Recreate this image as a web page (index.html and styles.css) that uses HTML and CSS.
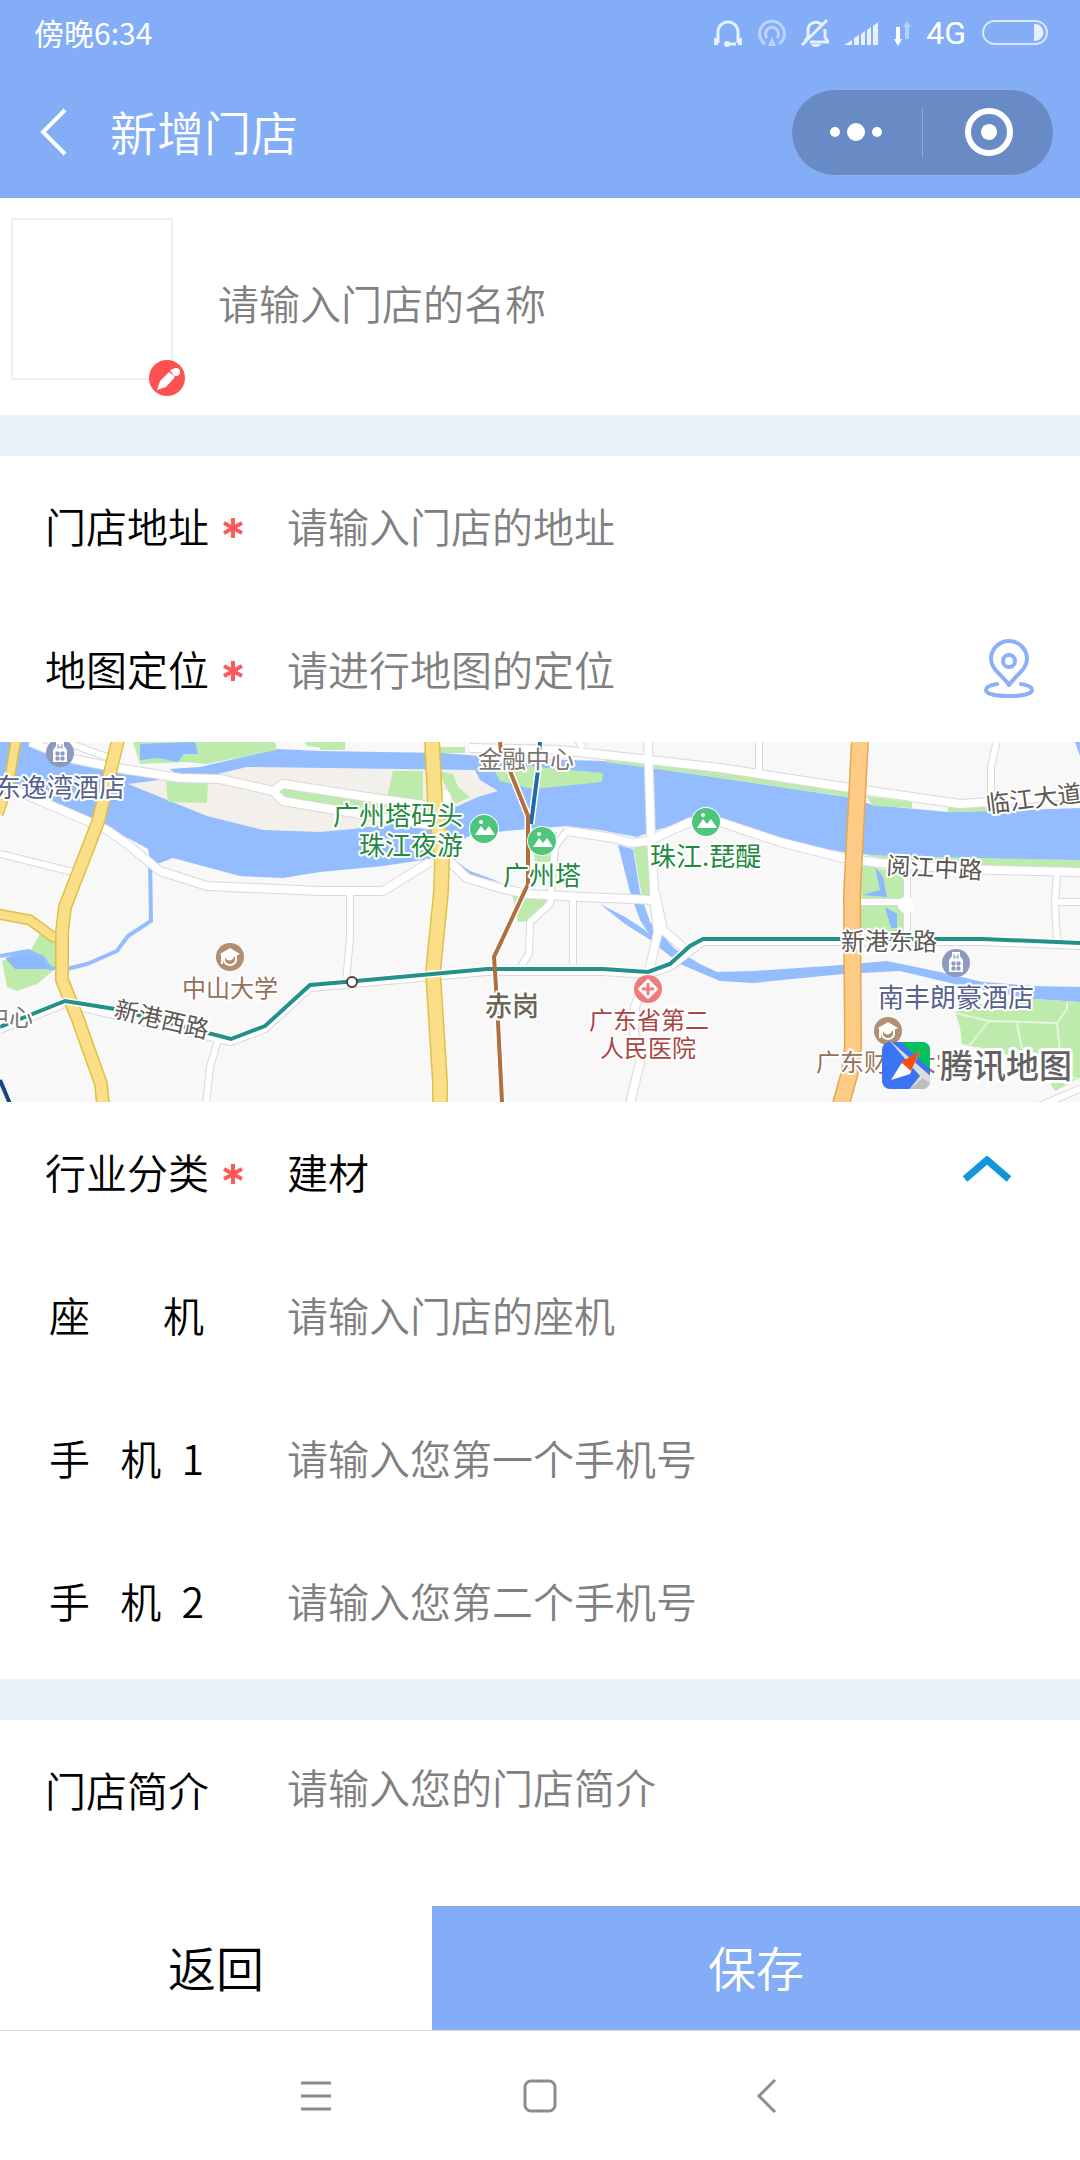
FILE: index.html
```
<!DOCTYPE html>
<html lang="zh-CN">
<head>
    <meta charset="UTF-8">
    <meta name="viewport" content="width=device-width, initial-scale=1.0">
    <title>新增门店</title>
    <link rel="stylesheet" href="styles.css">
</head>
<body>
    <header class="header">
        <div class="status-bar">
            <span class="time">傍晚6:34</span>
            <div class="status-icons">
                <svg width="30" height="30" viewBox="0 0 30 30" fill="none" stroke="#e6f0ff" stroke-width="3">
                    <path d="M5 25V14a10 10 0 0 1 20 0v11M14 26h9"/>
                    <path d="M3 20v7M27 20v7" stroke-width="4"/>
                    <circle cx="14" cy="26" r="2" fill="#e6f0ff" stroke-width="2"/>
                </svg>
                <svg width="28" height="30" viewBox="0 0 28 30" fill="none" stroke="#bcd4ff" stroke-width="3">
                    <path d="M7 26a12.500 12.500 0 1 1 14 0"/>
                    <path d="M9 20a6.500 6.500 0 1 1 10 0"/>
                    <path d="M14 19l4 9h-8z" fill="#bcd4ff" stroke="none"/>
                </svg>
                <svg width="28" height="30" viewBox="0 0 28 30" fill="none" stroke="#e6f0ff" stroke-width="3">
                    <path d="M4 23l3-4V12a8 8 0 0 1 13-6M24 11v8l3 5H9M1 27L26 2"/>
                    <path d="M10 26h10a5 3 0 0 1-10 0z" fill="#e6f0ff" stroke="none"/>
                </svg>
                <svg width="34" height="30" viewBox="0 0 34 30" fill="#e6f0ff">
                    <path d="M0 27l8-5v5zM10 20l5-3v10h-5zM17 16l4-3v14h-4zM23 12l4-3v18h-4zM29 8l5-4v23h-5z"/>
                </svg>
                <svg width="18" height="30" viewBox="0 0 18 30">
                    <path d="M3 9h4v12h2l-4 7-4-7h2z" fill="#fff"/>
                    <path d="M12 21h4V9h2l-4-6-4 6h2z" fill="#b4cfff"/>
                </svg>
                <span class="network">4G</span>
                <svg width="68" height="30" viewBox="0 0 68 30">
                    <rect x="2" y="3" width="64" height="23" rx="11.500" fill="none" stroke="#d8e6ff" stroke-width="2"/>
                    <path d="M53 6h1a8.500 8.500 0 0 1 0 17h-1z" fill="#e6f0ff"/>
                </svg>
            </div>
        </div>
        <div class="nav-bar">
            <button class="back-btn" type="button" aria-label="返回">
                <svg width="28" height="48" viewBox="0 0 28 48"><path d="M26 2L4 24l22 22" fill="none" stroke="#fff" stroke-width="4"/></svg>
            </button>
            <h1>新增门店</h1>
            <div class="capsule">
                <button type="button" aria-label="更多">
                    <svg width="54" height="54" viewBox="0 0 54 54" fill="#fff"><circle cx="5" cy="27" r="5"/><circle cx="26" cy="27" r="9"/><circle cx="47" cy="27" r="5"/></svg>
                </button>
                <button type="button" aria-label="关闭">
                    <svg width="54" height="54" viewBox="0 0 54 54"><circle cx="28" cy="27" r="21" fill="none" stroke="#fff" stroke-width="6"/><circle cx="28" cy="27" r="8" fill="#fff"/></svg>
                </button>
            </div>
        </div>
    </header>

    <form class="store-form">
        <section class="store-name">
            <button class="logo-box" type="button" aria-label="上传图片">
                <svg class="edit-badge" width="36" height="36" viewBox="0 0 36 36">
                    <circle cx="18" cy="18" r="18" fill="#fd5151"/>
                    <path d="M8 30l3-9 9-9 6 5-9 10zM21 11l2-2 6 5-2 2z" fill="#fff"/>
                    <circle cx="27" cy="12" r="4" fill="#fff"/>
                </svg>
            </button>
            <input type="text" aria-label="门店名称" placeholder="请输入门店的名称">
        </section>

        <section class="group">
            <div class="row">
                <label for="address">门店地址</label>
                <svg class="required" viewBox="0 0 22 22"><path d="M11 1v20M2 6l18 10M2 16L20 6"/></svg>
                <input type="text" id="address" placeholder="请输入门店的地址">
            </div>
            <div class="row">
                <label for="location">地图定位</label>
                <svg class="required" viewBox="0 0 22 22"><path d="M11 1v20M2 6l18 10M2 16L20 6"/></svg>
                <input type="text" id="location" placeholder="请进行地图的定位">
                <button class="pin-btn" type="button" aria-label="定位">
                    <svg width="50" height="62" viewBox="0 0 50 62" fill="none" stroke="#8bb0fa" stroke-width="4" stroke-linecap="round" stroke-linejoin="round">
                        <path d="M25 48C18 38 7 32 7 22a18 18 0 0 1 36 0c0 10-11 16-18 26z"/>
                        <circle cx="25" cy="24" r="6"/>
                        <path d="M13 47C6 48 2 50 2 53c0 4 10 6 23 6s23-2 23-6c0-3-4-5-11-6"/>
                    </svg>
                </button>
            </div>

            <svg class="map" viewBox="0 0 1080 360">
                <defs>
                    <g id="hotel">
                        <circle r="14" fill="#8d99bf"/>
                        <path d="M-7 9V-3l3-4v-4h8v4l3 4V9z" fill="#fff"/>
                        <path d="M-2-9v5M2-9v5M-2-6h4M-4-1h3v3h-3zM1-1h3v3h-3zM-4 4h3v3h-3zM1 4h3v3h-3z" fill="#8d99bf" stroke="#8d99bf"/>
                    </g>
                    <g id="school">
                        <circle r="14" fill="#b08e72"/>
                        <path d="M-10-3L0-9l10 6-6 3a5 6 0 0 1-9 0l-2-1v8h-2v-9z" fill="#fff"/>
                        <path d="M-6-1v4a6 5 0 0 0 12 0v-4" fill="none" stroke="#fff" stroke-width="2"/>
                    </g>
                    <g id="scenic">
                        <circle r="15" fill="#fff"/>
                        <circle r="14" fill="#4dc57b"/>
                        <path d="M-9 6l6-9 4 5 4-5 6 9z" fill="#fff"/>
                        <circle cx="-3" cy="-7" r="2" fill="#fff"/>
                    </g>
                    <g id="roads">
                        <path d="M0 42L43 60 90 80 107 88 127 102 160 129 207 144 320 149 383 149 430 120M448 118L467 136 500 146 527 152 583 155 655 158"/>
                        <path d="M650 98L690 80 720 80 780 100 843 116 880 121 960 127 1080 130M567 89L613 96 632 101 655 98"/>
                        <path d="M470 6L560 8 650 18 720 26 850 46 960 62 990 60 1080 52"/>
                        <path d="M648 -2L651 95 655 165 658 190 650 225 635 265 634 290 640 320 630 362M655 150L663 188 685 207"/>
                        <path d="M30 0L73 17 123 27 180 36 220 37 273 49 283 59 360 72 430 83M273 49L283 42 360 54 430 64"/>
                    </g>
                    <g id="streets">
                        <path d="M0 112L73 130M60 -2L107 15M350 149L350 195 346 240M573 155V222M567 89L555 105 550 162 530 180 529 212 520 226"/>
                        <path d="M759 -2V30M997 -2L991 25V58M907 126V194M1057 132L1055 160 1057 198M1057 160H1082M218 298L210 325 206 362M1030 368L1082 346M860 160H907M578 -2l5 8"/>
                        <path d="M0 288L65 262 231 300 265 287 310 246 487 230 603 230 648 233 670 225 703 200 983 200 1080 204"/>
                    </g>
                    <path id="avenue" d="M16 -2L8 45 -2 72M-2 172L30 178 53 195 60 194"/>
                    <path id="avenue-west" d="M118 -2L98 80 65 165 62 190 62 238 77 275 101 342 103 362"/>
                    <path id="avenue-mid" d="M432 -2L435 60 442 118 441 150 433 230 440 340 440 362"/>
                    <path id="avenue-east" d="M860 -2L852 152 853 305 850 330 841 362"/>
                    <path id="metro-line8" d="M0 285L65 259 115 267 231 297 265 284 310 243 345 240 487 227 603 227 648 230 670 222 690 204 703 197 983 197 1080 201"/>
                    <path id="metro-line3" d="M500 0L501 10 510 29 528 74 528 142 494 215 497 260 502 360"/>
                    <path id="metro-apm" d="M540 0L538 28 531 82"/>
                </defs>
                <rect width="1080" height="360" fill="#f8f8f8"/>

                <!-- 水域 -->
                <g fill="#94bdff">
                    <path d="M0 0H28L70 18 122 32 180 35 170 27 200 25 277 7 320 9 443 11 480 14 570 18 603 19 700 33 847 55 873 63 948 70 990 69 1080 66V119L913 118 887 115 843 110 780 99 722 82 690 78 650 90 637 95 600 88 567 84 505 89 470 94 450 103 430 117 383 124 320 130 283 136 240 134 173 116 157 122 150 118 148 107 130 97 107 87 90 82 40 58 0 44z"/>
                    <path d="M618 103L633 107 640 150 650 180 675 207 700 222 717 230 753 229 842 223 887 219 940 230 983 240 1033 244 1080 245V260L1033 257 967 245 900 229 843 232 753 241 720 239 680 222 655 202 640 178 630 150z"/>
                    <path d="M600 162L625 175 645 188 660 204 625 182zM454 118L470 129 500 140 470 134zM1075 0h5v14z"/>
                </g>

                <!-- 江心岛 -->
                <path d="M128 42L190 34 213 33 247 25 475 28 480 38 498 49 478 55 440 72 405 80 353 87 320 90 263 88 207 74z" fill="#f3f0eb"/>

                <!-- 绿地 -->
                <g fill="#bcebac">
                    <path d="M133 0H275L277 8 207 22 187 20 140 22zM305 0h40v8l-38-4zM320 0h25v8h-25zM440 5h25v6h-25z"/>
                    <path d="M166 40h42l-1 21-39-1zM273 52l10-8 77 13 27 7v8l-95-13zM387 55l6-26h30v30zM438 29l15 3 5 13 12 10-15 7z"/>
                    <path d="M495 30L527 24 603 31 602 40 533 47 500 39z"/>
                    <path d="M606 16L720 29 848 50V55L700 33 605 20zM866 54L912 60V66L873 64zM948 64L990 62V69L948 70zM860 112L890 114 1080 118V126L920 124z"/>
                    <path d="M40 192L55 199V227L37 242 17 249 7 245 2 219 30 209z"/>
                    <path d="M633 104L652 104V155H642zM512 152h38v10l-20 17-12 1zM533 105l24-15-4 30h-18z"/>
                    <path d="M860 122L903 132V190H860z"/>
                    <path d="M955 270L980 262 1033 257 1080 260V336L1055 349 1045 333 1030 318 962 302 960 285z"/>
                </g>
                <path d="M140 2L195 0 198 12 184 12 178 20 158 16 140 18zM875 125l8 10 4 20-25-2 18-5zM885 165l12 7v14h-6zM5 216l25-7 12 4 8 14H15z" fill="#8cb8ff"/>
                <path d="M150 118L151 179 128 194 117 209 87 222 67 227 50 226 42 215 28 209 0 214" fill="none" stroke="#94bdff" stroke-width="4"/>
                <path d="M955 271l34 8 68 2 10-14V260M989 279l-24 30M1017 281l4 22 10 22M1057 281l4 38M1030 318l50 20" fill="none" stroke="#e3f6dc" stroke-width="2"/>

                <!-- 普通道路 -->
                <g fill="none" stroke-linejoin="round">
                    <use href="#roads" stroke="#d9d9dd" stroke-width="10"/>
                    <use href="#streets" stroke="#d9d9dd" stroke-width="8"/>
                    <use href="#roads" stroke="#fff" stroke-width="8"/>
                    <use href="#streets" stroke="#fff" stroke-width="6"/>
                </g>
                <circle cx="906" cy="163" r="8" fill="#fff"/>
                <circle cx="444" cy="55" r="7" fill="#fff"/>

                <!-- 主干道 -->
                <g fill="none" stroke-linejoin="round">
                    <use href="#avenue" stroke="#e0bf45" stroke-width="11"/>
                    <use href="#avenue" stroke="#fbdf88" stroke-width="8"/>
                    <use href="#avenue-west" stroke="#e0bf45" stroke-width="14"/>
                    <use href="#avenue-west" stroke="#fbdf88" stroke-width="11"/>
                    <use href="#avenue-mid" stroke="#e0bf45" stroke-width="16"/>
                    <use href="#avenue-mid" stroke="#fbdf88" stroke-width="13"/>
                    <use href="#avenue-east" stroke="#e7a651" stroke-width="18"/>
                    <use href="#avenue-east" stroke="#fdcb85" stroke-width="15"/>
                </g>

                <!-- 地铁线 -->
                <g fill="none" stroke="#fff" stroke-width="7">
                    <use href="#metro-line8"/>
                    <use href="#metro-line3"/>
                    <use href="#metro-apm"/>
                </g>
                <g fill="none" stroke-width="4">
                    <use href="#metro-apm" stroke="#1b6ca8"/>
                    <path d="M0 338L10 362" stroke="#15457f"/>
                    <use href="#metro-line8" stroke="#23908a"/>
                    <use href="#metro-line3" stroke="#b26f3e"/>
                </g>
                <circle cx="352" cy="240" r="5" fill="#fff" stroke="#444" stroke-width="2"/>

                <use href="#hotel" x="60" y="11"/>
                <use href="#hotel" x="956" y="221"/>
                <use href="#school" x="230" y="215"/>
                <use href="#school" x="888" y="289"/>
                <use href="#scenic" x="484" y="87"/>
                <use href="#scenic" x="542" y="99"/>
                <use href="#scenic" x="706" y="80"/>
                <circle cx="648" cy="247" r="14" fill="#f07b7d"/>
                <path d="M648 238l9 9-9 9-9-9z" fill="#fff" stroke="#fff" stroke-width="2" stroke-linejoin="round"/>
                <path d="M648 241v12M642 247h12" stroke="#f07b7d" stroke-width="3"/>

                <!-- 地名 -->
                <g class="place">
                    <text class="hotel big" x="-5" y="55">东逸湾酒店</text>
                    <text class="hotel big" x="878" y="265">南丰朗豪酒店</text>
                    <text class="school" x="182" y="255">中山大学</text>
                    <text class="school" x="816" y="329">广东财经大学</text>
                    <text class="scenic big" x="333" y="83">广州塔码头</text>
                    <text class="scenic big" x="359" y="113">珠江夜游</text>
                    <text class="scenic big" x="503" y="143">广州塔</text>
                    <text class="scenic big" x="650" y="124">珠江.琵醍</text>
                    <text class="hospital" x="589" y="287">广东省第二</text>
                    <text class="hospital" x="600" y="315">人民医院</text>
                    <text class="station" x="485" y="274">赤岗</text>
                    <text class="center" x="478" y="26">金融中心</text>
                    <text class="center" x="-15" y="284">中心</text>
                    <text x="841" y="208">新港东路</text>
                    <text transform="translate(113 275) rotate(13)">新港西路</text>
                    <text transform="translate(886 132) rotate(3)">阅江中路</text>
                    <text transform="translate(987 71) rotate(-7)">临江大道</text>
                </g>

                <clipPath id="logo"><rect x="882" y="300" width="48" height="47" rx="8"/></clipPath>
                <g clip-path="url(#logo)">
                    <rect x="882" y="300" width="48" height="47" fill="#3b74f5"/>
                    <path d="M888 297L933 336V350H907L920 334z" fill="#dcdcdc"/>
                    <path d="M901 300h32v30z" fill="#06c160"/>
                    <path d="M910 347L923 336 933 345V350z" fill="#bdbdbd"/>
                </g>
                <path d="M920 309L901 322 891 338 910 332z" fill="#fff"/>
                <path d="M920 309L901 320 911 329z" fill="#fb4a12"/>
                <text class="brand" x="940" y="336">腾讯地图</text>
            </svg>

            <div class="row">
                <label for="category">行业分类</label>
                <svg class="required" viewBox="0 0 22 22"><path d="M11 1v20M2 6l18 10M2 16L20 6"/></svg>
                <select id="category">
                    <option>建材</option>
                </select>
                <svg class="arrow" width="50" height="30" viewBox="0 0 50 30"><path d="M3 23L25 4l22 19" fill="none" stroke="#1296db" stroke-width="7"/></svg>
            </div>
            <div class="row">
                <label class="spread" for="tel"><span>座</span><span>机</span></label>
                <input type="tel" id="tel" placeholder="请输入门店的座机">
            </div>
            <div class="row">
                <label class="spread" for="phone1"><span>手</span><span>机</span><span>1</span></label>
                <input type="tel" id="phone1" placeholder="请输入您第一个手机号">
            </div>
            <div class="row">
                <label class="spread" for="phone2"><span>手</span><span>机</span><span>2</span></label>
                <input type="tel" id="phone2" placeholder="请输入您第二个手机号">
            </div>
        </section>

        <section class="group intro">
            <div class="row">
                <label for="intro">门店简介</label>
                <textarea id="intro" rows="1" placeholder="请输入您的门店简介"></textarea>
            </div>
        </section>

        <div class="actions">
            <button class="cancel" type="button">返回</button>
            <button class="save" type="submit">保存</button>
        </div>
    </form>

    <nav class="system-nav">
        <button type="button" aria-label="菜单">
            <svg width="34" height="34" viewBox="0 0 34 34"><path d="M4 4h30M4 17h30M4 30h30"/></svg>
        </button>
        <button type="button" aria-label="主页">
            <svg width="34" height="34" viewBox="0 0 34 34"><rect x="2" y="2" width="30" height="30" rx="6"/></svg>
        </button>
        <button type="button" aria-label="后退">
            <svg width="34" height="34" viewBox="0 0 34 34"><path d="M26 1L10 17l16 16"/></svg>
        </button>
    </nav>
</body>
</html>
```
FILE: styles.css
```
* {
    box-sizing: border-box;
}

body {
    margin: 0;
    min-height: 100vh;
    display: flex;
    flex-direction: column;
    background-color: #fff;
    color: #000;
    font-family: "Noto Sans CJK SC", sans-serif;
    font-size: 41px;
    font-weight: 350;
}

button,
input,
select,
textarea {
    margin: 0;
    padding: 0;
    border: none;
    border-radius: 0;
    outline: none;
    background: none;
    color: inherit;
    font: inherit;
}

svg {
    display: block;
    flex-shrink: 0;
}

/* 顶部 */
.header {
    background-color: #83adf7;
    color: #fff;
}

.status-bar {
    display: flex;
    justify-content: space-between;
    align-items: center;
    height: 66px;
    padding: 0 31px 0 34px;
    font-size: 30px;
    font-weight: 400;
}

.time {
    padding-bottom: 2px;
}

.status-icons {
    display: flex;
    align-items: center;
    gap: 15px;
}

.network {
    font-family: Roboto, sans-serif;
    font-size: 32px;
}

.nav-bar {
    display: flex;
    align-items: center;
    height: 132px;
    padding: 0 26px 0 39px;
}

.nav-bar h1 {
    flex: 1;
    margin: 0 0 0 43px;
    padding-bottom: 4px;
    font-size: 47px;
    font-weight: 350;
}

.capsule {
    display: flex;
    width: 263px;
    height: 87px;
    border: 1px solid #8fb0ea;
    border-radius: 44px;
    background-color: #698bc5;
}

.capsule button {
    flex: 1;
    display: flex;
    justify-content: center;
    align-items: center;
}

.capsule button + button {
    margin: 17px 0;
    border-left: 1px solid #8daadb;
}

/* 表单 */
.store-form {
    flex: 1;
    display: flex;
    flex-direction: column;
}

.store-name {
    display: flex;
    align-items: center;
    height: 217px;
    padding: 0 46px 10px 11px;
}

.logo-box {
    position: relative;
    flex-shrink: 0;
    width: 162px;
    height: 162px;
    margin: 0 45px 6px 0;
    border: 2px solid #eee;
}

.edit-badge {
    position: absolute;
    right: -14px;
    bottom: -18px;
}

input,
textarea,
select {
    flex: 1;
    min-width: 0;
    height: 60px;
    line-height: 60px;
}

::placeholder {
    color: #808080;
    opacity: 1;
}

.group {
    padding-bottom: 5px;
    border-top: 41px solid #e9f1fb;
}

.row {
    display: flex;
    align-items: center;
    height: 143px;
    padding: 0 46px 6px 45px;
}

.row label {
    width: 177px;
    margin-right: 65px;
    white-space: nowrap;
}

.row label:has(+ .required) {
    margin-right: 0;
}

.row .spread {
    display: flex;
    justify-content: space-between;
    padding: 0 18px 0 4px;
}

.spread span:nth-child(2) {
    margin-left: 10px;
}

.required {
    width: 22px;
    height: 22px;
    margin: 6px 43px 0 0;
    fill: none;
    stroke: #fd5b5b;
    stroke-width: 4;
}

select {
    appearance: none;
}

.arrow {
    margin-right: 22px;
}

textarea {
    height: 66px;
    resize: none;
    overflow: hidden;
}

.intro {
    flex: 1;
}

/* 地图 */
.map {
    width: 100%;
    height: auto;
}

.place text {
    font-size: 24px;
    font-weight: 400;
    fill: #5c5753;
    stroke: #fff;
    stroke-width: 4px;
    stroke-linejoin: round;
    paint-order: stroke;
}

.place .big {
    font-size: 26px;
}

.place .hotel {
    fill: #56618f;
}

.place .school {
    fill: #96705a;
}

.place .scenic {
    fill: #1f8a3f;
}

.place .hospital {
    fill: #ab4444;
}

.place .center {
    fill: #7b756f;
}

.place .station {
    font-size: 27px;
    font-weight: 500;
    fill: #6b6553;
}

.brand {
    font-size: 33px;
    font-weight: 500;
    fill: #626262;
    stroke: #fff;
    stroke-width: 6px;
    stroke-linejoin: round;
    paint-order: stroke;
}

/* 底部按钮 */
.actions {
    display: flex;
    height: 124px;
    font-size: 48px;
}

.actions button {
    padding-bottom: 4px;
}

.cancel {
    width: 40%;
}

.save {
    width: 60%;
    background-color: #83adf7;
    color: #fff;
}

.system-nav {
    display: flex;
    justify-content: center;
    align-items: center;
    gap: 192px;
    height: 130px;
    border-top: 1px solid #ddd;
}

.system-nav svg {
    fill: none;
    stroke: #8c8c8c;
    stroke-width: 3;
}
```
